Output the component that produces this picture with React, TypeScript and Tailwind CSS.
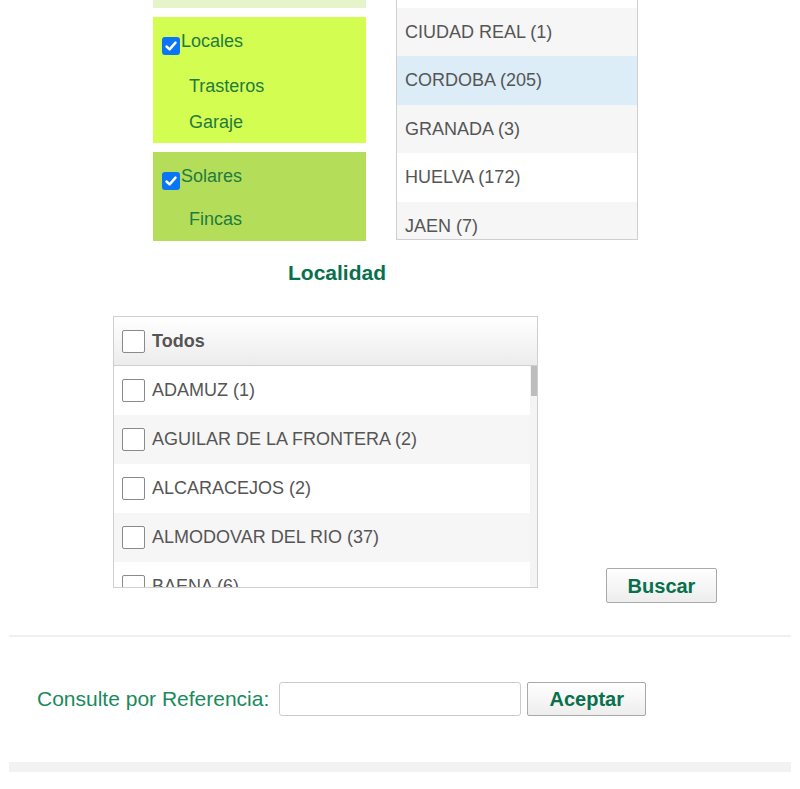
import React from "react";

const provincias = [
  { name: "CIUDAD REAL (1)", bg: "bg-[#f6f6f6]", h: "h-[48px]" },
  { name: "CORDOBA (205)", bg: "bg-[#dcedf8]", h: "h-[49px]" },
  { name: "GRANADA (3)", bg: "bg-[#f6f6f6]", h: "h-[48px]" },
  { name: "HUELVA (172)", bg: "bg-white", h: "h-[49px]" },
  { name: "JAEN (7)", bg: "bg-[#f6f6f6]", h: "h-[49px]" },
];

const localidades = [
  "ADAMUZ (1)",
  "AGUILAR DE LA FRONTERA (2)",
  "ALCARACEJOS (2)",
  "ALMODOVAR DEL RIO (37)",
  "BAENA (6)",
];

const Checked = () => (
  <span className="w-[18px] h-[18px] shrink-0 rounded-[3px] bg-[#0a75f5] flex items-center justify-center">
    <svg width="14" height="14" viewBox="0 0 14 14">
      <path d="M2.5 7.5 L5.6 10.4 L11.5 3.6" fill="none" stroke="white" strokeWidth="2.4" strokeLinecap="round" strokeLinejoin="round" />
    </svg>
  </span>
);

const Box = () => (
  <span className="w-[23px] h-[23px] shrink-0 border-[1.5px] border-[#8a8a8a] rounded-[2px] bg-white" />
);

const App = () => {
  return (
    <div className="w-[800px] h-[789px] overflow-hidden bg-white" style={{ fontFamily: '"Liberation Sans", Arial, sans-serif' }}>
      {/* Tipos + provincias */}
      <div className="flex pl-[153px]">
        <div className="w-[213px] flex flex-col">
          <div className="h-[8px] bg-[#e6f4c9]" />

          <div className="mt-[9px] h-[126px] bg-[#d4fd52] pt-[14px] pl-[9px] text-[#1f7b3f] text-[18px]">
            <div className="flex items-start">
              <span className="mt-[6px]"><Checked /></span>
              <span className="ml-[1px] leading-[20px]">Locales</span>
            </div>
            <div className="mt-[13px] pl-[27px] leading-[36px]">Trasteros</div>
            <div className="pl-[27px] leading-[36px]">Garaje</div>
          </div>

          <div className="mt-[9px] h-[89px] bg-[#b4de5a] pt-[14px] pl-[9px] text-[#1f7b3f] text-[18px]">
            <div className="flex items-start">
              <span className="mt-[6px]"><Checked /></span>
              <span className="ml-[1px] leading-[20px]">Solares</span>
            </div>
            <div className="mt-[11px] pl-[27px] leading-[36px]">Fincas</div>
          </div>
        </div>

        <div className="ml-[30px] w-[242px] h-[240px] border-x border-b border-[#cfcfcf] overflow-hidden">
          <div className="h-[8px] bg-white" />
          {provincias.map((p) => (
            <div key={p.name} className={`${p.h} ${p.bg} flex items-center pl-[8px] text-[18px] text-[#555]`}>
              {p.name}
            </div>
          ))}
        </div>
      </div>

      {/* Localidad */}
      <div className="pl-[288px] mt-[20px] text-[21px] leading-[24px] font-bold text-[#08704c]">Localidad</div>

      <div className="flex pl-[113px] mt-[31px]">
        <div className="w-[425px] h-[272px] border border-[#cfcfcf] flex flex-col overflow-hidden">
          <div className="h-[49px] shrink-0 flex items-center gap-[7px] pl-[8px] bg-gradient-to-b from-white to-[#ececec] border-b border-[#cfcfcf]">
            <Box />
            <span className="text-[18px] font-bold text-[#555]">Todos</span>
          </div>
          <div className="relative flex-1 overflow-hidden">
            {localidades.map((l, i) => (
              <div key={l} className={`h-[49px] flex items-center gap-[7px] pl-[8px] ${i % 2 === 1 ? "bg-[#f6f6f6]" : "bg-white"}`}>
                <Box />
                <span className="text-[18px] text-[#555]">{l}</span>
              </div>
            ))}
            <div className="absolute right-0 top-0 w-[7px] h-full bg-[#f4f4f4]">
              <div className="w-[6px] ml-[1px] h-[30px] bg-[#bdbdbd]" />
            </div>
          </div>
        </div>

        <button className="ml-[68px] mt-[252px] w-[111px] h-[35px] border border-[#a9a9a9] rounded-[2px] bg-gradient-to-b from-white to-[#ededed] text-[20px] font-bold text-[#08704c]">
          Buscar
        </button>
      </div>

      <div className="mx-[9px] mt-[32px] h-[2px] bg-[#f0f0f0]" />

      {/* Referencia */}
      <div className="flex items-center pl-[37px] mt-[45px]">
        <span className="text-[21px] text-[#1a8a5c] mr-[10px]">Consulte por Referencia:</span>
        <input className="w-[242px] h-[34px] border border-[#cccccc] rounded-[3px] bg-white" />
        <button className="ml-[6px] w-[119px] h-[34px] border border-[#a9a9a9] rounded-[2px] bg-gradient-to-b from-white to-[#ededed] text-[20px] font-bold text-[#08704c]">
          Aceptar
        </button>
      </div>

      <div className="mx-[9px] mt-[46px] h-[10px] bg-[#f2f2f2]" />
    </div>
  );
};

export default App;
